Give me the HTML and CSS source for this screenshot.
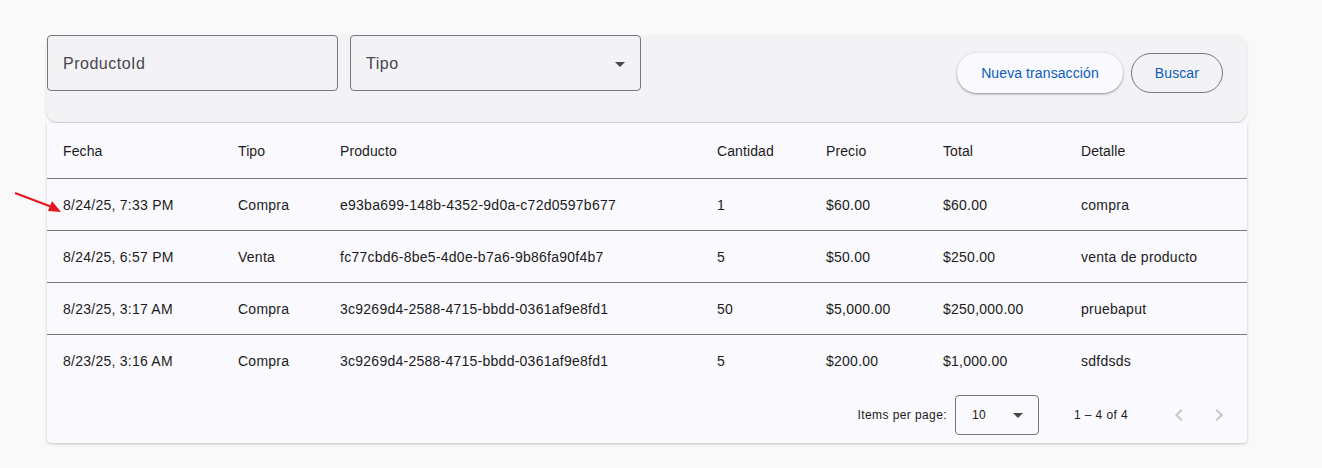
FILE: index.html
```html
<!DOCTYPE html>
<html lang="es">
<head>
<meta charset="utf-8">
<title>Transacciones</title>
<link rel="stylesheet" href="styles.css">
</head>
<body>
<div class="page">
  <div class="filters">
    <div class="field"><span class="field-label">ProductoId</span></div>
    <div class="field field-select"><span class="field-label">Tipo</span><span class="caret"></span></div>
    <div class="actions">
      <button class="btn btn-elevated">Nueva transacción</button>
      <button class="btn btn-outlined">Buscar</button>
    </div>
  </div>
  <div class="table-card">
    <table class="grid">
      <colgroup>
        <col class="c-fecha"><col class="c-tipo"><col class="c-prod"><col class="c-cant"><col class="c-precio"><col class="c-total"><col class="c-det">
      </colgroup>
      <thead>
        <tr><th>Fecha</th><th>Tipo</th><th>Producto</th><th>Cantidad</th><th>Precio</th><th>Total</th><th>Detalle</th></tr>
      </thead>
      <tbody>
        <tr><td>8/24/25, 7:33 PM</td><td>Compra</td><td>e93ba699-148b-4352-9d0a-c72d0597b677</td><td>1</td><td>$60.00</td><td>$60.00</td><td>compra</td></tr>
        <tr><td>8/24/25, 6:57 PM</td><td>Venta</td><td>fc77cbd6-8be5-4d0e-b7a6-9b86fa90f4b7</td><td>5</td><td>$50.00</td><td>$250.00</td><td>venta de producto</td></tr>
        <tr><td>8/23/25, 3:17 AM</td><td>Compra</td><td>3c9269d4-2588-4715-bbdd-0361af9e8fd1</td><td>50</td><td>$5,000.00</td><td>$250,000.00</td><td>pruebaput</td></tr>
        <tr class="last"><td>8/23/25, 3:16 AM</td><td>Compra</td><td>3c9269d4-2588-4715-bbdd-0361af9e8fd1</td><td>5</td><td>$200.00</td><td>$1,000.00</td><td>sdfdsds</td></tr>
      </tbody>
    </table>
    <div class="paginator">
      <span class="pg-label">Items per page:</span>
      <div class="pg-select"><span>10</span><span class="caret"></span></div>
      <span class="pg-range">1 – 4 of 4</span>
      <button class="pg-btn" aria-label="Previous page"><svg width="24" height="24" viewBox="0 0 24 24"><path d="M15.41 7.41 14 6l-6 6 6 6 1.41-1.41L10.83 12z" fill="currentColor"/></svg></button>
      <button class="pg-btn" aria-label="Next page"><svg width="24" height="24" viewBox="0 0 24 24"><path d="M8.59 16.59 10 18l6-6-6-6-1.41 1.41L13.17 12z" fill="currentColor"/></svg></button>
    </div>
  </div>
</div>
<svg class="annot" width="70" height="36" viewBox="0 0 70 36">
  <line x1="15" y1="13" x2="52" y2="27" stroke="#e5171f" stroke-width="2.2"/>
  <polygon points="61,32 48,31 52,21" fill="#e5171f"/>
</svg>
</body>
</html>
```
FILE: styles.css
```css
* { box-sizing: border-box; }
html, body { margin: 0; padding: 0; }
body {
  background: #f9f9fa;
  font-family: "Liberation Sans", Arial, sans-serif;
  color: #1d1b20;
  width: 1322px;
  height: 468px;
  overflow: hidden;
  position: relative;
}
.page {
  padding: 35px 0 0 46px;
  width: 1247px;
}
.filters {
  display: flex;
  align-items: flex-start;
  gap: 12px;
  height: 87px;
  padding-left: 1px;
  padding-right: 24px;
  background: #f3f3f5;
  border-radius: 12px;
  box-shadow: 0 1px 2px rgba(0,0,0,0.18);
}
.field {
  width: 291px;
  height: 56px;
  border: 1px solid #79747e;
  border-radius: 4px;
  display: flex;
  align-items: center;
  padding: 2px 15px 0;
  font-size: 16px;
  letter-spacing: 0.5px;
  color: #49454f;
}
.field-select { justify-content: space-between; padding-right: 15px; }
.caret {
  width: 0; height: 0;
  border-left: 5px solid transparent;
  border-right: 5px solid transparent;
  border-top: 5px solid #49454f;
}
.actions {
  margin-left: auto;
  margin-top: 18px;
  display: flex;
  gap: 8px;
}
.btn {
  height: 40px;
  border-radius: 20px;
  padding: 0 23px;
  font-family: "Liberation Sans", Arial, sans-serif;
  font-size: 14px;
  letter-spacing: 0.1px;
  color: #0b5cbd;
  background: transparent;
  border: 1px solid transparent;
}
.btn-elevated {
  background: #f9f9fe;
  box-shadow: 0 1px 3px rgba(0,0,0,0.3), 0 1px 1px rgba(0,0,0,0.14);
}
.btn-outlined { border-color: #79747e; }
.table-card {
  margin-top: 1px;
  background: #f9f9fe;
  border-radius: 0 0 4px 4px;
  box-shadow: 0 1px 3px rgba(0,0,0,0.22);
  margin-left: 1px;
}
.grid {
  width: 100%;
  border-collapse: collapse;
  table-layout: fixed;
  font-size: 14px;
}
.c-fecha { width: 175px; }
.c-tipo { width: 102px; }
.c-prod { width: 377px; }
.c-cant { width: 109px; }
.c-precio { width: 117px; }
.c-total { width: 138px; }
.grid th {
  height: 55px;
  text-align: left;
  font-weight: normal;
  padding: 2px 16px 0;
  letter-spacing: 0.1px;
  border-bottom: 1px solid #79747e;
  color: #1d1b20;
}
.grid td {
  height: 52px;
  padding: 2px 16px 0;
  letter-spacing: 0.25px;
  border-bottom: 1px solid #79747e;
  white-space: nowrap;
}
.grid tr.last td { border-bottom: none; }
.paginator {
  height: 57px;
  display: flex;
  align-items: center;
  justify-content: flex-end;
  padding: 1px 8px 0 0;
  font-size: 12px;
  letter-spacing: 0.4px;
  color: #1d1b20;
}
.pg-label { margin-right: 8px; }
.pg-select {
  width: 84px;
  height: 40px;
  border: 1px solid #79747e;
  border-radius: 4px;
  display: flex;
  align-items: center;
  justify-content: space-between;
  padding: 0 15px 0 16px;
  font-size: 12px;
}
.pg-range { margin: 0 31px 0 35px; }
.pg-btn {
  width: 40px;
  height: 40px;
  border: none;
  background: transparent;
  color: #c6c5ca;
  display: flex;
  align-items: center;
  justify-content: center;
  padding: 0;
}
.annot {
  position: absolute;
  left: 0;
  top: 180px;
}
```
